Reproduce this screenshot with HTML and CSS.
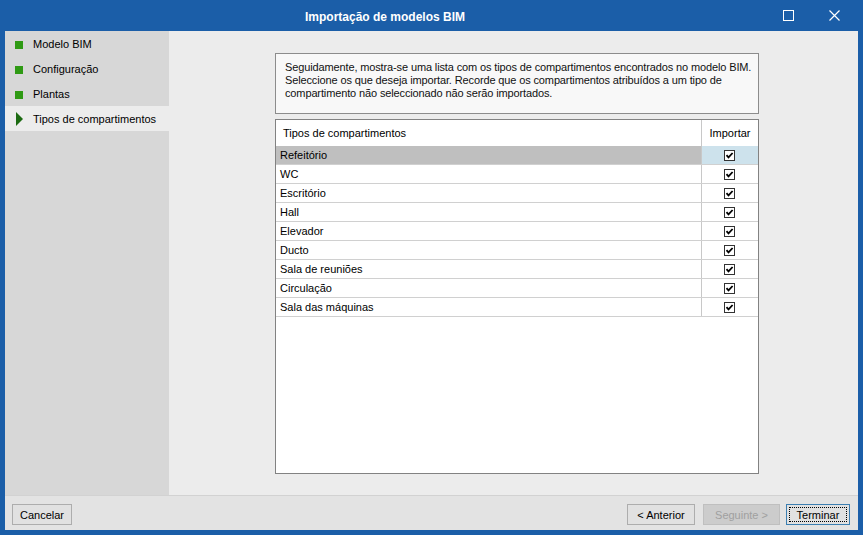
FILE: index.html
```html
<!DOCTYPE html>
<html>
<head>
<meta charset="utf-8">
<title>Importação de modelos BIM</title>
<link rel="stylesheet" href="styles.css">
</head>
<body>
<div class="window">
  <div class="titlebar">
    <div class="title">Importação de modelos BIM</div>
    <div class="ctrls">
      <span class="ctl"><svg width="11" height="11" viewBox="0 0 11 11"><rect x="0.5" y="0.5" width="10" height="10" fill="none" stroke="#fff" stroke-width="1"/></svg></span>
      <span class="ctl"><svg width="11" height="11" viewBox="0 0 11 11"><path d="M0.5 0.5 L10.5 10.5 M10.5 0.5 L0.5 10.5" stroke="#fff" stroke-width="1.2" fill="none"/></svg></span>
    </div>
  </div>
  <div class="client">
    <div class="body">
      <nav class="steps">
        <div class="step"><span class="mark sq"></span><span>Modelo BIM</span></div>
        <div class="step"><span class="mark sq"></span><span>Configuração</span></div>
        <div class="step"><span class="mark sq"></span><span>Plantas</span></div>
        <div class="step active"><span class="mark tri"></span><span>Tipos de compartimentos</span></div>
      </nav>
      <main class="content">
        <div class="desc">Seguidamente, mostra-se uma lista com os tipos de compartimentos encontrados no modelo BIM.<br>Seleccione os que deseja importar. Recorde que os compartimentos atribuídos a um tipo de<br>compartimento não seleccionado não serão importados.</div>
        <div class="grid">
          <div class="ghead"><div class="c1">Tipos de compartimentos</div><div class="c2">Importar</div></div>
          <div class="row sel"><div class="c1">Refeitório</div><div class="c2"><svg class="cb" width="11" height="11" viewBox="0 0 11 11"><rect x="0.5" y="0.5" width="10" height="10" fill="#fff" stroke="#333"/><path d="M2.5 5.2 L4.5 7.4 L8.6 3" stroke="#000" stroke-width="1.8" fill="none"/></svg></div></div>
          <div class="row"><div class="c1">WC</div><div class="c2"><svg class="cb" width="11" height="11" viewBox="0 0 11 11"><rect x="0.5" y="0.5" width="10" height="10" fill="#fff" stroke="#333"/><path d="M2.5 5.2 L4.5 7.4 L8.6 3" stroke="#000" stroke-width="1.8" fill="none"/></svg></div></div>
          <div class="row"><div class="c1">Escritório</div><div class="c2"><svg class="cb" width="11" height="11" viewBox="0 0 11 11"><rect x="0.5" y="0.5" width="10" height="10" fill="#fff" stroke="#333"/><path d="M2.5 5.2 L4.5 7.4 L8.6 3" stroke="#000" stroke-width="1.8" fill="none"/></svg></div></div>
          <div class="row"><div class="c1">Hall</div><div class="c2"><svg class="cb" width="11" height="11" viewBox="0 0 11 11"><rect x="0.5" y="0.5" width="10" height="10" fill="#fff" stroke="#333"/><path d="M2.5 5.2 L4.5 7.4 L8.6 3" stroke="#000" stroke-width="1.8" fill="none"/></svg></div></div>
          <div class="row"><div class="c1">Elevador</div><div class="c2"><svg class="cb" width="11" height="11" viewBox="0 0 11 11"><rect x="0.5" y="0.5" width="10" height="10" fill="#fff" stroke="#333"/><path d="M2.5 5.2 L4.5 7.4 L8.6 3" stroke="#000" stroke-width="1.8" fill="none"/></svg></div></div>
          <div class="row"><div class="c1">Ducto</div><div class="c2"><svg class="cb" width="11" height="11" viewBox="0 0 11 11"><rect x="0.5" y="0.5" width="10" height="10" fill="#fff" stroke="#333"/><path d="M2.5 5.2 L4.5 7.4 L8.6 3" stroke="#000" stroke-width="1.8" fill="none"/></svg></div></div>
          <div class="row"><div class="c1">Sala de reuniões</div><div class="c2"><svg class="cb" width="11" height="11" viewBox="0 0 11 11"><rect x="0.5" y="0.5" width="10" height="10" fill="#fff" stroke="#333"/><path d="M2.5 5.2 L4.5 7.4 L8.6 3" stroke="#000" stroke-width="1.8" fill="none"/></svg></div></div>
          <div class="row"><div class="c1">Circulação</div><div class="c2"><svg class="cb" width="11" height="11" viewBox="0 0 11 11"><rect x="0.5" y="0.5" width="10" height="10" fill="#fff" stroke="#333"/><path d="M2.5 5.2 L4.5 7.4 L8.6 3" stroke="#000" stroke-width="1.8" fill="none"/></svg></div></div>
          <div class="row"><div class="c1">Sala das máquinas</div><div class="c2"><svg class="cb" width="11" height="11" viewBox="0 0 11 11"><rect x="0.5" y="0.5" width="10" height="10" fill="#fff" stroke="#333"/><path d="M2.5 5.2 L4.5 7.4 L8.6 3" stroke="#000" stroke-width="1.8" fill="none"/></svg></div></div>
        </div>
      </main>
    </div>
    <footer class="footer">
      <button class="btn cancel">Cancelar</button>
      <div class="spacer"></div>
      <button class="btn prev">&lt; Anterior</button>
      <button class="btn next" disabled>Seguinte &gt;</button>
      <button class="btn finish"><span class="focus">Terminar</span></button>
    </footer>
  </div>
</div>
</body>
</html>
```

FILE: styles.css
```css
* { box-sizing: border-box; }
html, body { margin: 0; padding: 0; }
body {
  width: 863px;
  height: 535px;
  overflow: hidden;
  font-family: "Liberation Sans", Arial, sans-serif;
  font-size: 11px;
  color: #000;
}
.window {
  width: 863px;
  height: 535px;
  background: #1b5ea8;
  padding: 0 5px 5px 5px;
  display: flex;
  flex-direction: column;
}
.titlebar {
  height: 31px;
  display: flex;
  align-items: center;
  color: #fff;
}
.title {
  flex: 1;
  text-align: center;
  font-weight: bold;
  font-size: 12px;
  padding-top: 2px;
}
.ctrls {
  display: flex;
  height: 31px;
  margin-right: 1px;
}
.ctl {
  width: 46px;
  display: flex;
  align-items: center;
  justify-content: center;
}
.ctl svg { display: block; }
.client {
  flex: 1;
  display: flex;
  flex-direction: column;
  background: #ececec;
}
.body {
  height: 464px;
  display: flex;
}
.steps {
  width: 164px;
  background: #d7d7d7;
  display: flex;
  flex-direction: column;
}
.step {
  height: 25px;
  display: flex;
  align-items: center;
  padding-left: 10px;
  gap: 10px;
}
.step.active { background: #ececec; }
.mark { width: 8px; flex: none; }
.mark.sq {
  height: 8px;
  background: #2f9a14;
  margin-top: 2px;
}
.mark.tri {
  width: 0;
  height: 0;
  margin-left: 1px;
  margin-right: 0;
  border-left: 7px solid #1c6b12;
  border-top: 7px solid transparent;
  border-bottom: 7px solid transparent;
}
.content {
  flex: 1;
  padding: 22px 0 0 106px;
}
.desc {
  width: 484px;
  height: 61px;
  border: 1px solid #8c8c8c;
  background: #f8f8f8;
  padding: 7px 0 0 9px;
  line-height: 13px;
  color: #111;
  white-space: nowrap;
  letter-spacing: -0.13px;
  overflow: hidden;
}
.grid {
  margin-top: 5px;
  width: 484px;
  height: 355px;
  border: 1px solid #828282;
  background: #fff;
}
.ghead {
  height: 26px;
  display: flex;
}
.ghead .c1 {
  width: 426px;
  padding-left: 7px;
  border-right: 1px solid #c8c8c8;
  display: flex;
  align-items: center;
}
.ghead .c2 {
  flex: 1;
  display: flex;
  align-items: center;
  justify-content: center;
}
.row {
  height: 19px;
  display: flex;
  border-bottom: 1px solid #d0d0d0;
}
.row .c1 {
  width: 426px;
  padding-left: 4px;
  border-right: 1px solid #c8c8c8;
  display: flex;
  align-items: center;
}
.row .c2 {
  flex: 1;
  display: flex;
  align-items: center;
  justify-content: center;
  padding-right: 1px;
}
.row.sel .c1 { background: #bfbfbf; }
.row.sel .c2 { background: #cde2ec; }
.cb { display: block; }
.footer {
  flex: 1;
  background: #e3e3e3;
  border-top: 1px solid #d2d2d2;
  display: flex;
  align-items: flex-start;
  padding: 8px 8px 0 7px;
  gap: 8px;
}
.spacer { flex: 1; }
.btn {
  height: 21px;
  font-family: "Liberation Sans", Arial, sans-serif;
  font-size: 11px;
  color: #000;
  background: #e1e1e1;
  border: 1px solid #adadad;
  padding: 0;
  margin: 0;
  display: flex;
  align-items: center;
  justify-content: center;
}
.cancel { width: 60px; }
.prev { width: 68px; }
.next {
  width: 77px;
  color: #a0a0a0;
  background: #cccccc;
  border-color: #bfbfbf;
}
.finish {
  width: 64px;
  margin-left: -2px;
  border-color: #3c7fb1;
  padding: 2px;
}
.focus {
  flex: 1;
  align-self: stretch;
  border: 1px dotted #000;
  display: flex;
  align-items: center;
  justify-content: center;
}
```
